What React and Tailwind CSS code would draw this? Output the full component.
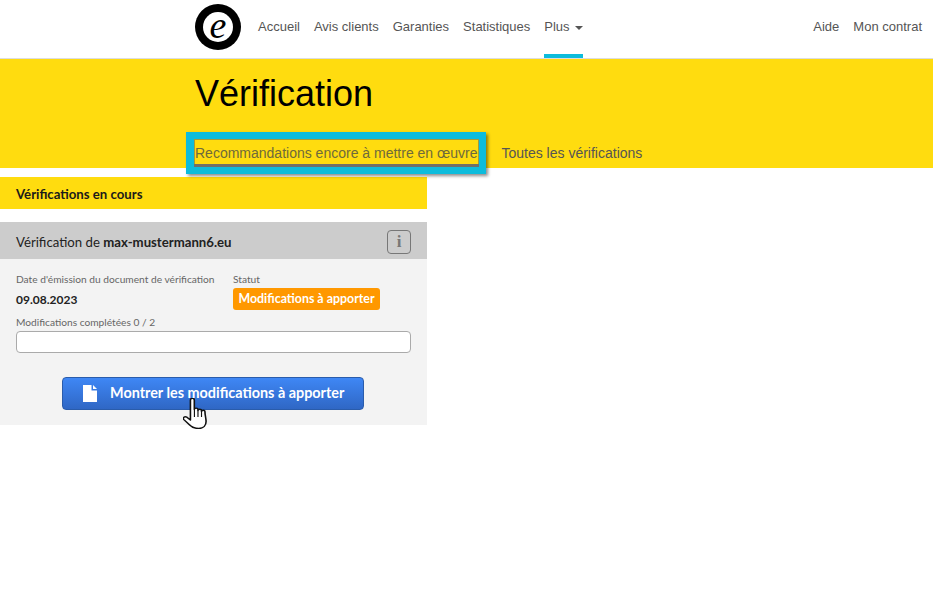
const navItems = ["Accueil", "Avis clients", "Garanties", "Statistiques"];

const sans = "font-['Liberation_Sans',Arial,sans-serif]";
const body = "font-['Lato','Noto_Sans',sans-serif]";

const Logo = () => (
  <div className="flex h-[46px] w-[46px] shrink-0 items-center justify-center rounded-full bg-black">
    <div className="flex h-[30px] w-[30px] items-center justify-center rounded-full bg-white">
      <span className="font-['Liberation_Serif',serif] text-[38px] leading-none italic text-black relative -top-[2px]">e</span>
    </div>
  </div>
);

const HandCursor = () => (
  <svg className="absolute left-[183px] top-[398px]" width="24" height="31" viewBox="1 1 21 31" preserveAspectRatio="none">
    <path
      d="M7.5 3.2c0-2.4 3.400-2.400 3.400 0v9.300c0-1.800 3.200-1.800 3.200 0v1c0-1.700 3.100-1.700 3.100 0v1c0-1.600 3-1.600 3 .1 0 3.800 1 6.400 1 10 0 3.600-2.100 6.900-6.400 6.900-4 0-6.200-1.300-8.200-3.700L1.800 22.600c-1.500-1.900.7-3.700 2.600-2.400l3.100 2.800z"
      fill="#fff"
      stroke="#111"
      strokeWidth="1.4"
      strokeLinejoin="round"
    />
    <path d="M11 13v7M14.100 13.500v6.500M17.200 14.500v5.500" stroke="#111" strokeWidth="1" fill="none" />
  </svg>
);

export default function App() {
  return (
    <div className={`relative min-h-[606px] bg-white ${sans}`}>
      {/* Top nav */}
      <header className="flex h-[59px] items-stretch border-b border-[#dddddd] pl-[195px] pr-[11px]">
        <div className="flex items-center pb-[4px]">
          <Logo />
        </div>
        <nav className="ml-[17px] flex gap-[14px] text-[13px] leading-[18px] text-[#555555]">
          {navItems.map((item) => (
            <a key={item} className="pt-[18px]">{item}</a>
          ))}
          <a className="flex h-[58px] w-[39px] items-start gap-[5px] border-b-[4px] border-[#0dbcdc] pt-[18px]">
            Plus
            <span className="mt-[8px] h-0 w-0 border-x-[4px] border-t-[4px] border-x-transparent border-t-[#555555]" />
          </a>
        </nav>
        <div className="ml-auto flex gap-[14px] pt-[18px] text-[13px] leading-[18px] text-[#555555]">
          <a>Aide</a>
          <a>Mon contrat</a>
        </div>
      </header>

      {/* Yellow title band */}
      <section className="h-[109px] bg-[#ffdc0f] pl-[195px]">
        <h1 className="pt-[14px] text-[36px] leading-[42px] text-black">Vérification</h1>
        <div className="mt-[28px] flex gap-[24px] text-[14px] leading-[20px] text-[#555555]">
          <a className="text-[#6e6a3c]">Recommandations encore à mettre en œuvre</a>
          <a>Toutes les vérifications</a>
        </div>
      </section>

      {/* Highlight around the active tab */}
      <div className="absolute left-[186px] top-[132px] h-[42px] w-[300px] border-[7px] border-l-[8px] border-[#0dbcdc] shadow-[2px_2px_3px_rgba(0,0,0,0.45)]">
        <div className="absolute inset-0 border-x border-t border-[#a59a3a]" />
        <div className="absolute inset-x-0 bottom-0 h-[3px] bg-[#70706a]" />
      </div>

      {/* Left column */}
      <main className={`mt-[9px] w-[427px] ${body}`}>
        <div className="flex h-[32px] items-center bg-[#ffdc0f] pl-[16px] pt-[4px] text-[13.2px] font-bold text-[#1a1a1a]">
          Vérifications en cours
        </div>

        <div className="mt-[13px] flex h-[37px] items-center justify-between bg-[#cccccc] px-[16px] pt-[2px] text-[13.2px] text-[#222222]">
          <span className="mt-[2px]">
            Vérification de <b>max-mustermann6.eu</b>
          </span>
          <span className="flex h-[24px] w-[24px] items-center justify-center rounded-[4px] border border-[#777777] font-['Liberation_Serif',serif] text-[17px] font-bold text-[#777777]">
            i
          </span>
        </div>

        <div className="h-[166px] bg-[#f3f3f3] px-[16px] pt-[13px]">
          <div className="flex">
            <div className="w-[217px]">
              <div className="text-[10.2px] leading-[14px] text-[#666666]">Date d'émission du document de vérification</div>
              <div className="mt-[6px] text-[12px] font-bold leading-[16px] text-[#222222]">09.08.2023</div>
            </div>
            <div>
              <div className="text-[10.2px] leading-[14px] text-[#666666]">Statut</div>
              <div className="mt-[2px] flex h-[22px] w-[147px] items-center justify-center rounded-[3px] bg-[#ff9800] text-[12.4px] font-bold text-white">
                Modifications à apporter
              </div>
            </div>
          </div>
          <div className="mt-[5px] text-[10.2px] leading-[14px] text-[#666666]">Modifications complétées 0 / 2</div>
          <div className="mt-[2px] h-[22px] rounded-[4px] border border-[#aaaaaa] bg-white" />
          <div className="mt-[24px] flex justify-center pr-[1px]">
            <button className="flex h-[33px] w-[302px] items-center rounded-[4px] border border-[#2a5cab] bg-gradient-to-b from-[#3f87f5] to-[#2f67c5] pb-[1px] pl-[20px] text-[14.4px] font-bold text-white">
              <svg width="14" height="17" viewBox="0 0 14 17" className="mr-[13px]">
                <path d="M0 0h8.500v5.500H14V17H0z M10 0l4 4h-4z" fill="#fff" />
              </svg>
              Montrer les modifications à apporter
            </button>
          </div>
        </div>
      </main>

      <HandCursor />
    </div>
  );
}
